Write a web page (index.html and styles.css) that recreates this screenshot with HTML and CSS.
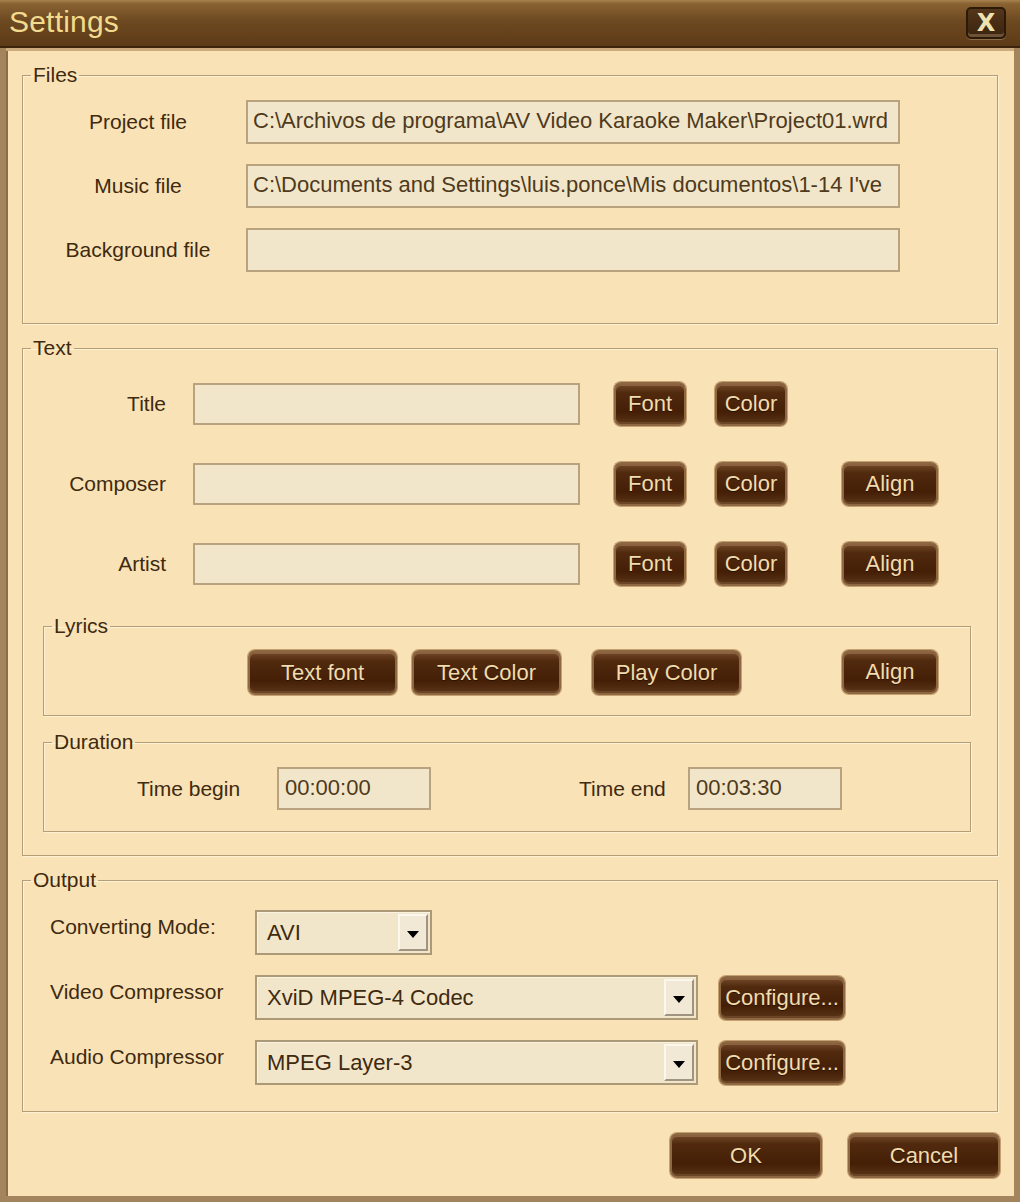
FILE: index.html
```html
<!DOCTYPE html>
<html lang="en">
<head>
  <meta charset="UTF-8">
  <title>Settings</title>
  <link rel="stylesheet" href="styles.css">
</head>
<body>
  <div class="window">
    <div class="titlebar">
      <span class="title">Settings</span>
      <button class="close" type="button">X</button>
    </div>

    <div class="client">
      <!-- Files -->
      <fieldset class="group">
        <legend>Files</legend>
        <div class="group-body files">
          <div class="file-row">
            <label>Project file</label>
            <div class="field">C:\Archivos de programa\AV Video Karaoke Maker\Project01.wrd</div>
          </div>
          <div class="file-row">
            <label>Music file</label>
            <div class="field">C:\Documents and Settings\luis.ponce\Mis documentos\1-14 I've</div>
          </div>
          <div class="file-row">
            <label>Background file</label>
            <div class="field"></div>
          </div>
        </div>
      </fieldset>

      <!-- Text -->
      <fieldset class="group">
        <legend>Text</legend>
        <div class="group-body text">
          <div class="text-row">
            <label>Title</label>
            <div class="field"></div>
            <button class="btn btn-font" type="button">Font</button>
            <button class="btn btn-color" type="button">Color</button>
          </div>
          <div class="text-row">
            <label>Composer</label>
            <div class="field"></div>
            <button class="btn btn-font" type="button">Font</button>
            <button class="btn btn-color" type="button">Color</button>
            <button class="btn btn-align" type="button">Align</button>
          </div>
          <div class="text-row">
            <label>Artist</label>
            <div class="field"></div>
            <button class="btn btn-font" type="button">Font</button>
            <button class="btn btn-color" type="button">Color</button>
            <button class="btn btn-align" type="button">Align</button>
          </div>

          <fieldset class="group sub lyrics">
            <legend>Lyrics</legend>
            <div class="group-body lyrics-body">
              <button class="btn btn-lyric" type="button">Text font</button>
              <button class="btn btn-lyric second" type="button">Text Color</button>
              <button class="btn btn-lyric play" type="button">Play Color</button>
              <button class="btn btn-align last" type="button">Align</button>
            </div>
          </fieldset>

          <fieldset class="group sub duration">
            <legend>Duration</legend>
            <div class="group-body duration-body">
              <label class="time-begin">Time begin</label>
              <div class="field time">00:00:00</div>
              <label class="time-end">Time end</label>
              <div class="field time">00:03:30</div>
            </div>
          </fieldset>
        </div>
      </fieldset>

      <!-- Output -->
      <fieldset class="group">
        <legend>Output</legend>
        <div class="group-body output">
          <div class="out-row">
            <label>Converting Mode:</label>
            <div class="select short"><span>AVI</span><i class="arrow"></i></div>
          </div>
          <div class="out-row">
            <label>Video Compressor</label>
            <div class="select long"><span>XviD MPEG-4 Codec</span><i class="arrow"></i></div>
            <button class="btn btn-config" type="button">Configure...</button>
          </div>
          <div class="out-row">
            <label>Audio Compressor</label>
            <div class="select long"><span>MPEG Layer-3</span><i class="arrow"></i></div>
            <button class="btn btn-config" type="button">Configure...</button>
          </div>
        </div>
      </fieldset>

      <div class="actions">
        <button class="btn btn-wide" type="button">OK</button>
        <button class="btn btn-wide" type="button">Cancel</button>
      </div>
    </div>
  </div>
</body>
</html>
```

FILE: styles.css
```css
:root {
  --bg: #f9e3b6;
  --ink: #3f2a10;
  --field-bg: #f2e6ca;
  --field-border: #b9a27e;
  --line: #b59d78;
  --font: "Liberation Sans", Arial, sans-serif;
}

* {
  box-sizing: border-box;
}

body {
  margin: 0;
  font-family: var(--font);
  color: var(--ink);
}

.window {
  width: 1020px;
  height: 1202px;
  display: flex;
  flex-direction: column;
  background: #a4845c;
  padding: 0 6px 6px 6px;
  overflow: hidden;
}

/* Title bar */
.titlebar {
  height: 48px;
  margin: 0 -6px;
  display: flex;
  align-items: center;
  justify-content: space-between;
  padding: 0 14px 2px 9px;
  background: linear-gradient(#a8824f 0, #8a6332 8%, #6d4921 45%, #5d3b17 100%);
  border-bottom: 2px solid #3b240b;
}

.title {
  font-size: 30px;
  color: #f2db8e;
  letter-spacing: 0.2px;
}

.close {
  width: 40px;
  height: 32px;
  margin-top: 2px;
  border: 2px solid #2c1a08;
  border-radius: 5px;
  background: linear-gradient(#54361a, #3a230e);
  box-shadow: inset 0 -3px 0 #6e5238, 0 1px 0 #8d6c48;
  color: #eee2b0;
  font: bold 24px/1 "DejaVu Sans", sans-serif;
  padding: 0;
}

.client {
  flex: 1;
  background: var(--bg);
  border-top: 3px solid #cbab7e;
  box-shadow: inset 2px 0 0 #8d6d48;
  padding: 12px 16px 0 16px;
  display: flex;
  flex-direction: column;
  gap: 12px;
}

/* Group boxes */
.group {
  margin: 0;
  padding: 0;
  border: 1px solid var(--line);
  box-shadow: inset 1px 1px 0 #fff2d2, 1px 1px 0 #fff2d2;
  min-width: 0;
}

.group legend {
  margin-left: 8px;
  padding: 0 2px;
  font-size: 21px;
  line-height: 24px;
  color: var(--ink);
}

label {
  font-size: 21px;
  line-height: 24px;
  color: var(--ink);
  white-space: nowrap;
}

.field {
  background: var(--field-bg);
  border: 2px solid var(--field-border);
  font-size: 22px;
  line-height: 38px;
  color: #4e3a1c;
  padding: 0 5px;
  white-space: nowrap;
  overflow: hidden;
}

/* Files */
.files {
  padding: 13px 0 51px 17px;
  display: flex;
  flex-direction: column;
  gap: 20px;
}

.file-row {
  display: flex;
  align-items: center;
  gap: 10px;
  height: 44px;
}

.file-row label {
  width: 196px;
  text-align: center;
}

.file-row .field {
  width: 654px;
  height: 44px;
}

/* Text */
.text {
  padding: 22px 26px 23px 20px;
  display: flex;
  flex-direction: column;
  gap: 36px;
}

.text-row {
  display: flex;
  align-items: center;
  height: 44px;
}

.text-row label {
  width: 123px;
  text-align: right;
  margin-right: 27px;
}

.text-row .field {
  width: 387px;
  height: 42px;
}

.text-row .btn-font {
  margin-left: 34px;
}

.text-row .btn-color {
  margin-left: 29px;
}

.text-row .btn-align {
  margin-left: 55px;
}

.sub.lyrics {
  margin-top: -8px;
}

.sub.duration {
  margin-top: -22px;
}

.lyrics-body {
  display: flex;
  padding: 12px 0 20px 204px;
}

.lyrics-body .second {
  margin-left: 15px;
}

.lyrics-body .play {
  margin-left: 31px;
}

.lyrics-body .last {
  margin-left: 101px;
}

.duration-body {
  display: flex;
  align-items: center;
  padding: 13px 0 21px 93px;
}

.time-begin {
  width: 105px;
  margin-right: 35px;
}

.time-end {
  width: 89px;
  margin-left: 148px;
  margin-right: 20px;
}

.field.time {
  width: 154px;
  height: 43px;
  padding-left: 6px;
}

/* Output */
.output {
  padding: 18px 0 26px 27px;
  display: flex;
  flex-direction: column;
  gap: 20px;
}

.out-row {
  display: flex;
  align-items: center;
  height: 45px;
}

.out-row label {
  width: 205px;
  align-self: flex-start;
  padding-top: 5px;
}

.select {
  height: 45px;
  display: flex;
  align-items: center;
  justify-content: space-between;
  background: var(--field-bg);
  border: 2px solid #ab9978;
  box-shadow: inset 1px 1px 0 #faf3e0;
  padding: 2px;
  font-size: 22px;
  color: #3f2a10;
}

.select span {
  padding-left: 8px;
}

.select.short {
  width: 177px;
}

.select.long {
  width: 443px;
}

.arrow {
  width: 30px;
  height: 100%;
  position: relative;
  background: #f1e9d6;
  border-left: 2px solid #fbf7ec;
  border-top: 2px solid #fbf7ec;
  border-right: 2px solid #a09480;
  border-bottom: 2px solid #a09480;
}

.arrow::after {
  content: "";
  position: absolute;
  left: 7px;
  top: 15px;
  border-left: 6px solid transparent;
  border-right: 6px solid transparent;
  border-top: 7px solid #000;
}

.btn-config {
  margin-left: 21px;
  width: 126px;
  height: 40px;
  font-size: 21px;
}

/* Buttons */
.btn {
  height: 44px;
  padding: 0;
  font-family: var(--font);
  font-size: 22px;
  color: #f2dcae;
  background: linear-gradient(#74492a 0, #512a0e 22%, #441f06 70%, #5b3517 100%);
  border: 2px solid #8e6843;
  border-radius: 7px;
  box-shadow: 0 0 0 1px #c5a070, inset 0 2px 0 #8b6240, inset 0 -2px 0 #6b4526;
  text-shadow: 0 1px 0 #2a1302;
}

.btn-font,
.btn-color {
  width: 72px;
}

.btn-align {
  width: 96px;
}

.btn-lyric {
  width: 149px;
  height: 45px;
}

/* Dialog buttons */
.actions {
  display: flex;
  justify-content: flex-end;
  gap: 26px;
  margin-top: 9px;
  margin-right: -2px;
}

.btn-wide {
  width: 152px;
  height: 45px;
}
```
